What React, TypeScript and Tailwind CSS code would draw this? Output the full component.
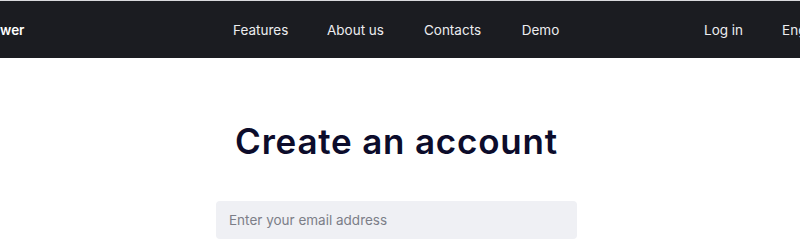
export default function App() {
  const navItems = [
    { label: 'Features', width: 'w-[55px]' },
    { label: 'About us', width: 'w-[57px]' },
    { label: 'Contacts', width: 'w-[59px]' },
    { label: 'Demo', width: 'w-[39px]' },
  ];

  return (
    <div className="w-[800px] h-[252px] overflow-hidden bg-white font-['Inter',sans-serif]">
      {/* Header */}
      <header className="border-t border-[#d9d9dc] bg-[#1b1c21] h-[58px] pt-[2px] flex items-center text-white whitespace-nowrap">
        <div className="w-[233px] shrink-0 text-[13.5px] font-semibold">wer</div>
        <nav className="flex items-center gap-[39px] text-[13.5px] text-[#ececef]">
          {navItems.map((item) => (
            <a key={item.label} href="#" className={`${item.width} text-center`}>
              {item.label}
            </a>
          ))}
        </nav>
        <div className="ml-auto w-[96px] shrink-0 flex items-center gap-[39px] text-[13.5px] text-[#ececef]">
          <a href="#">Log in</a>
          <span>English</span>
        </div>
      </header>

      {/* Content */}
      <main className="flex flex-col items-center pt-[61px] pr-[7px]">
        <h1 className="text-[35px] leading-[44px] font-semibold text-[#0c0c2b] tracking-[0.8px]">
          Create an account
        </h1>
        <input
          type="email"
          placeholder="Enter your email address"
          className="mt-[38px] w-[361px] h-[38px] rounded-[4px] bg-[#eff0f4] px-[13px] text-[13.5px] placeholder:text-[#7c7e88] outline-none"
        />
      </main>
    </div>
  );
}
